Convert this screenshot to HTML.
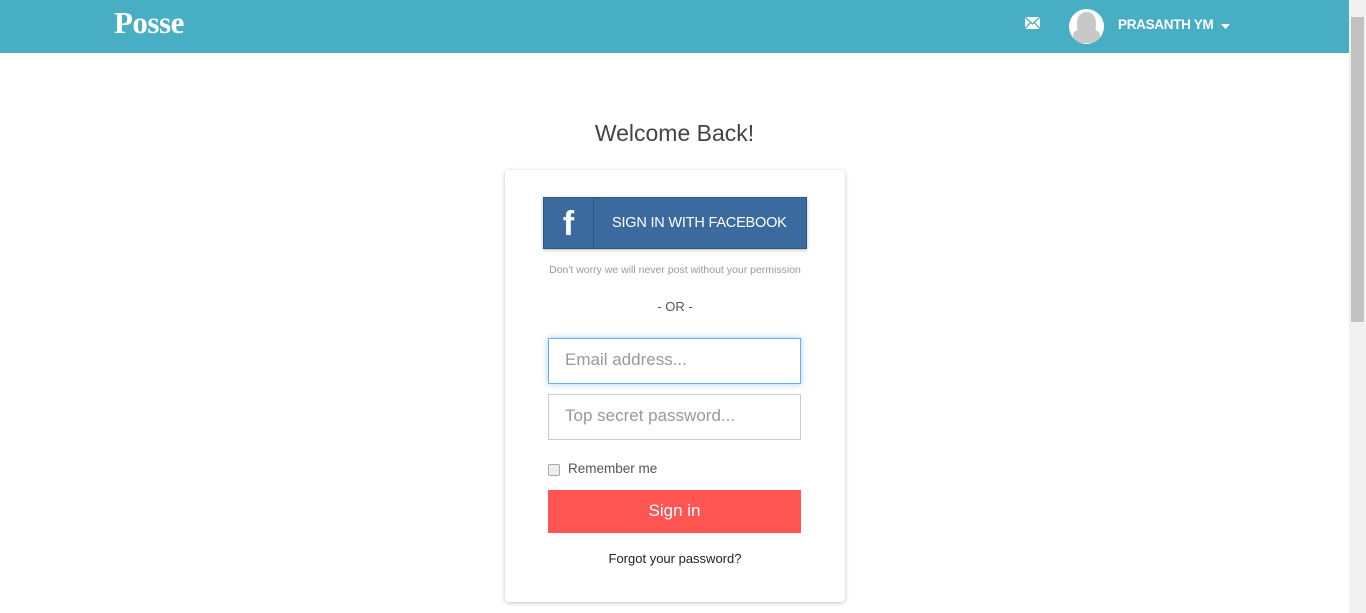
<!DOCTYPE html>
<html><head><meta charset="utf-8"><style>
*{box-sizing:border-box;margin:0;padding:0}
body{width:1366px;height:613px;overflow:hidden;background:#fff;font-family:"Liberation Sans",sans-serif;position:relative}
.nav{position:absolute;left:0;top:0;width:1349px;height:53px;background:#48aec3}
.logo{position:absolute;left:114px;top:5px;color:#fff;font-size:31px;font-family:"Liberation Serif",serif;font-weight:bold;letter-spacing:-0.5px}
.sb{position:absolute;left:1349px;top:0;width:17px;height:613px;background:#f1f1f1}
.thumb{position:absolute;left:1351px;top:17px;width:13px;height:305px;background:#c1c1c1}
.name{position:absolute;left:1118px;top:17px;color:#fff;font-weight:bold;font-size:13.5px;letter-spacing:-0.3px}
.av{position:absolute;left:1069px;top:9px;width:35px;height:35px;border-radius:50%;background:#fff;overflow:hidden}
.av .h{position:absolute;left:8px;top:3px;width:19px;height:24px;background:#c8c8c8;border-radius:45%}
.av .s{position:absolute;left:4px;top:20px;width:27px;height:14px;background:#c8c8c8;border-radius:40% 40% 0 0}
h1{position:absolute;left:0;width:1349px;top:120px;text-align:center;font-weight:normal;font-size:23px;color:#444}
.card{position:absolute;left:505px;top:170px;width:340px;height:432px;background:#fff;border-radius:4px;box-shadow:0 1px 4px rgba(0,0,0,.25)}
.fb{position:absolute;left:38px;top:27px;width:264px;height:52px;background:#3b6b9e;border:1px solid #2d5683;color:#fff;box-shadow:0 1px 3px rgba(0,0,0,.3)}
.fb .f{position:absolute;left:0;top:0;width:50px;height:50px;border-right:1px solid #2d5683;font-size:34px;font-weight:bold;text-align:center;line-height:52px}
.fb .t{position:absolute;left:68px;top:17px;font-size:14.5px;letter-spacing:-0.2px}
.small{position:absolute;left:0;width:340px;top:94px;text-align:center;font-size:10.5px;color:#999}
.or{position:absolute;left:0;width:340px;top:129px;text-align:center;font-size:13px;color:#555}
.in{position:absolute;left:43px;width:253px;height:46px;border:1px solid #ccc;color:#999;font-size:17px;padding:11px 16px}
.cb{position:absolute;left:43px;top:294px;width:12px;height:12px;border:1px solid #aaa;border-radius:2px;background:#eee}
.rm{position:absolute;left:63px;top:291px;font-size:13.5px;color:#555}
.btn{position:absolute;left:43px;top:320px;width:253px;height:43px;background:#ff5654;color:#fff;font-size:17px;text-align:center;line-height:41px}
.fg{position:absolute;left:0;width:340px;top:381px;text-align:center;font-size:13px;color:#222}
</style></head><body>
<div class="nav">
<div class="logo">Posse</div>
<svg style="position:absolute;left:1025px;top:17px" width="15" height="12" viewBox="0 0 15 12"><rect width="15" height="12" fill="#fff"/><path d="M0 0L7.5 7L15 0M0 12L5.5 5.5M15 12L9.5 5.5" stroke="#48aec3" stroke-width="1.3" fill="none"/></svg>
<div class="av"><div class="h"></div><div class="s"></div></div>
<div class="name">PRASANTH YM</div>
<svg style="position:absolute;left:1221px;top:24px" width="9" height="5"><path d="M0 0H9L4.5 5Z" fill="#fff"/></svg>
</div>
<div class="sb"></div><div class="thumb"></div>
<h1>Welcome Back!</h1>
<div class="card">
<div class="fb"><div class="f">f</div><div class="t">SIGN IN WITH FACEBOOK</div></div>
<div class="small">Don't worry we will never post without your permission</div>
<div class="or">- OR -</div>
<div class="in" style="top:168px;border-color:#66afe9;box-shadow:0 0 6px rgba(102,175,233,.6)">Email address...</div>
<div class="in" style="top:224px">Top secret password...</div>
<div class="cb"></div><div class="rm">Remember me</div>
<div class="btn">Sign in</div>
<div class="fg">Forgot your password?</div>
</div>
</body></html>
